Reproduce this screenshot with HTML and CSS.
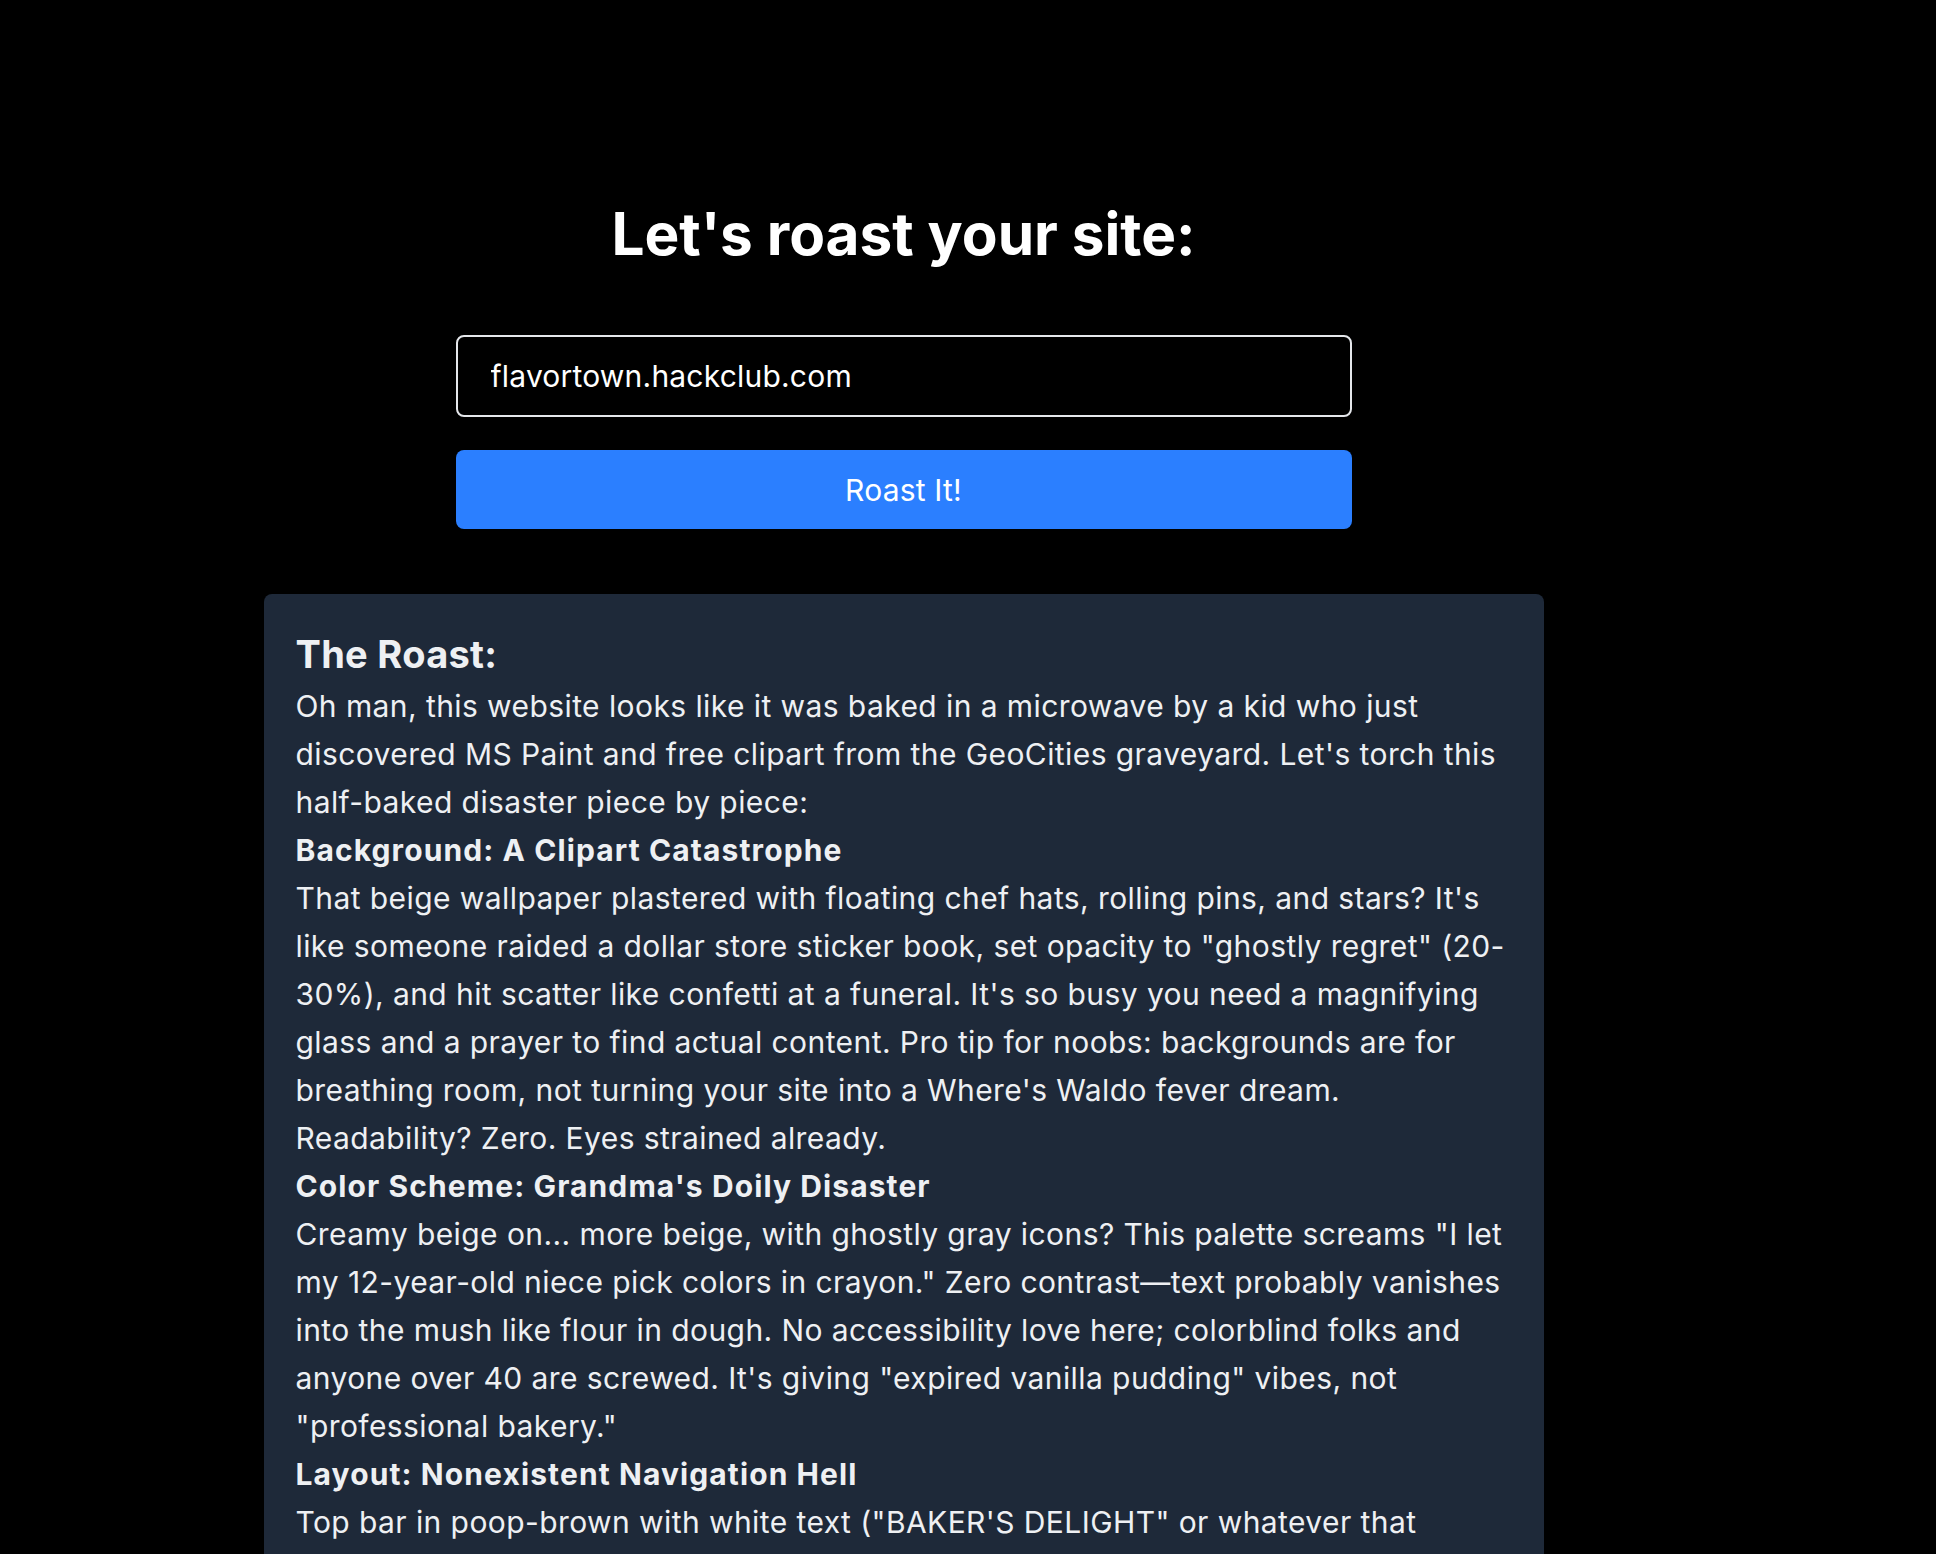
FILE: index.html
```html
<!DOCTYPE html>
<html lang="en">
<head>
    <meta charset="UTF-8">
    <meta name="viewport" content="width=device-width, initial-scale=1.0">
    <title>Roast My Site</title>
    <link rel="stylesheet" href="styles.css">
</head>
<body>
    <main class="page">
        <h1>Let's roast your site:</h1>

        <form class="roast-form" onsubmit="return false;">
            <input type="text" class="url-input" value="flavortown.hackclub.com">
            <button type="submit" class="roast-button">Roast It!</button>
        </form>

        <section class="roast-card">
            <h2>The Roast:</h2>
            <p>Oh man, this website looks like it was baked in a microwave by a kid who just discovered MS Paint and free clipart from the GeoCities graveyard. Let's torch this half-baked disaster piece by piece:</p>
            <p><strong>Background: A Clipart Catastrophe</strong></p>
            <p>That beige wallpaper plastered with floating chef hats, rolling pins, and stars? It's like someone raided a dollar store sticker book, set opacity to "ghostly regret" (20-30%), and hit scatter like confetti at a funeral. It's so busy you need a magnifying glass and a prayer to find actual content. Pro tip for noobs: backgrounds are for breathing room, not turning your site into a Where's Waldo fever dream. Readability? Zero. Eyes strained already.</p>
            <p><strong>Color Scheme: Grandma's Doily Disaster</strong></p>
            <p>Creamy beige on... more beige, with ghostly gray icons? This palette screams "I let my 12-year-old niece pick colors in crayon." Zero contrast—text probably vanishes into the mush like flour in dough. No accessibility love here; colorblind folks and anyone over 40 are screwed. It's giving "expired vanilla pudding" vibes, not "professional bakery."</p>
            <p><strong>Layout: Nonexistent Navigation Hell</strong></p>
            <p>Top bar in poop-brown with white text ("BAKER'S DELIGHT" or whatever that monstrosity says) and then... nothing. No menu, no links, no clue where to click. Visitors land, squint at the wallpaper, and bounce faster than a dropped soufflé.</p>
        </section>
    </main>
</body>
</html>
```

FILE: styles.css
```css
* {
    box-sizing: border-box;
}

body {
    margin: 0;
    font-family: 'Inter', 'Liberation Sans', sans-serif;
    background-color: black;
    color: white;
}

.page {
    display: flex;
    flex-direction: column;
    align-items: center;
    padding: 199px 129px 80px 0;
}

h1 {
    margin: 0;
    font-size: 58.5px;
    font-weight: 700;
    line-height: 1.2;
}

.roast-form {
    display: flex;
    flex-direction: column;
    gap: 33px;
    width: 896px;
    margin-top: 66px;
}

.url-input {
    height: 82px;
    padding: 0 33px;
    background: black;
    color: white;
    border: 2px solid #e5e7eb;
    border-radius: 8px;
    font-family: inherit;
    font-size: 30px;
    letter-spacing: 0.2px;
    outline: none;
}

.roast-button {
    height: 79px;
    background-color: #2b7fff;
    color: white;
    border: none;
    border-radius: 8px;
    font-family: inherit;
    font-size: 30px;
    letter-spacing: 0.2px;
    cursor: pointer;
}

.roast-card {
    width: 1280px;
    margin-top: 65px;
    padding: 32px;
    background-color: #1e2939;
    border-radius: 8px;
    color: #eef0f3;
}

.roast-card h2 {
    margin: 0;
    font-size: 38px;
    font-weight: 700;
    line-height: 56px;
    letter-spacing: 0.3px;
}

.roast-card p {
    margin: 0;
    font-size: 30px;
    line-height: 48px;
    letter-spacing: 0.42px;
}

.roast-card strong {
    letter-spacing: 1.1px;
}
```
